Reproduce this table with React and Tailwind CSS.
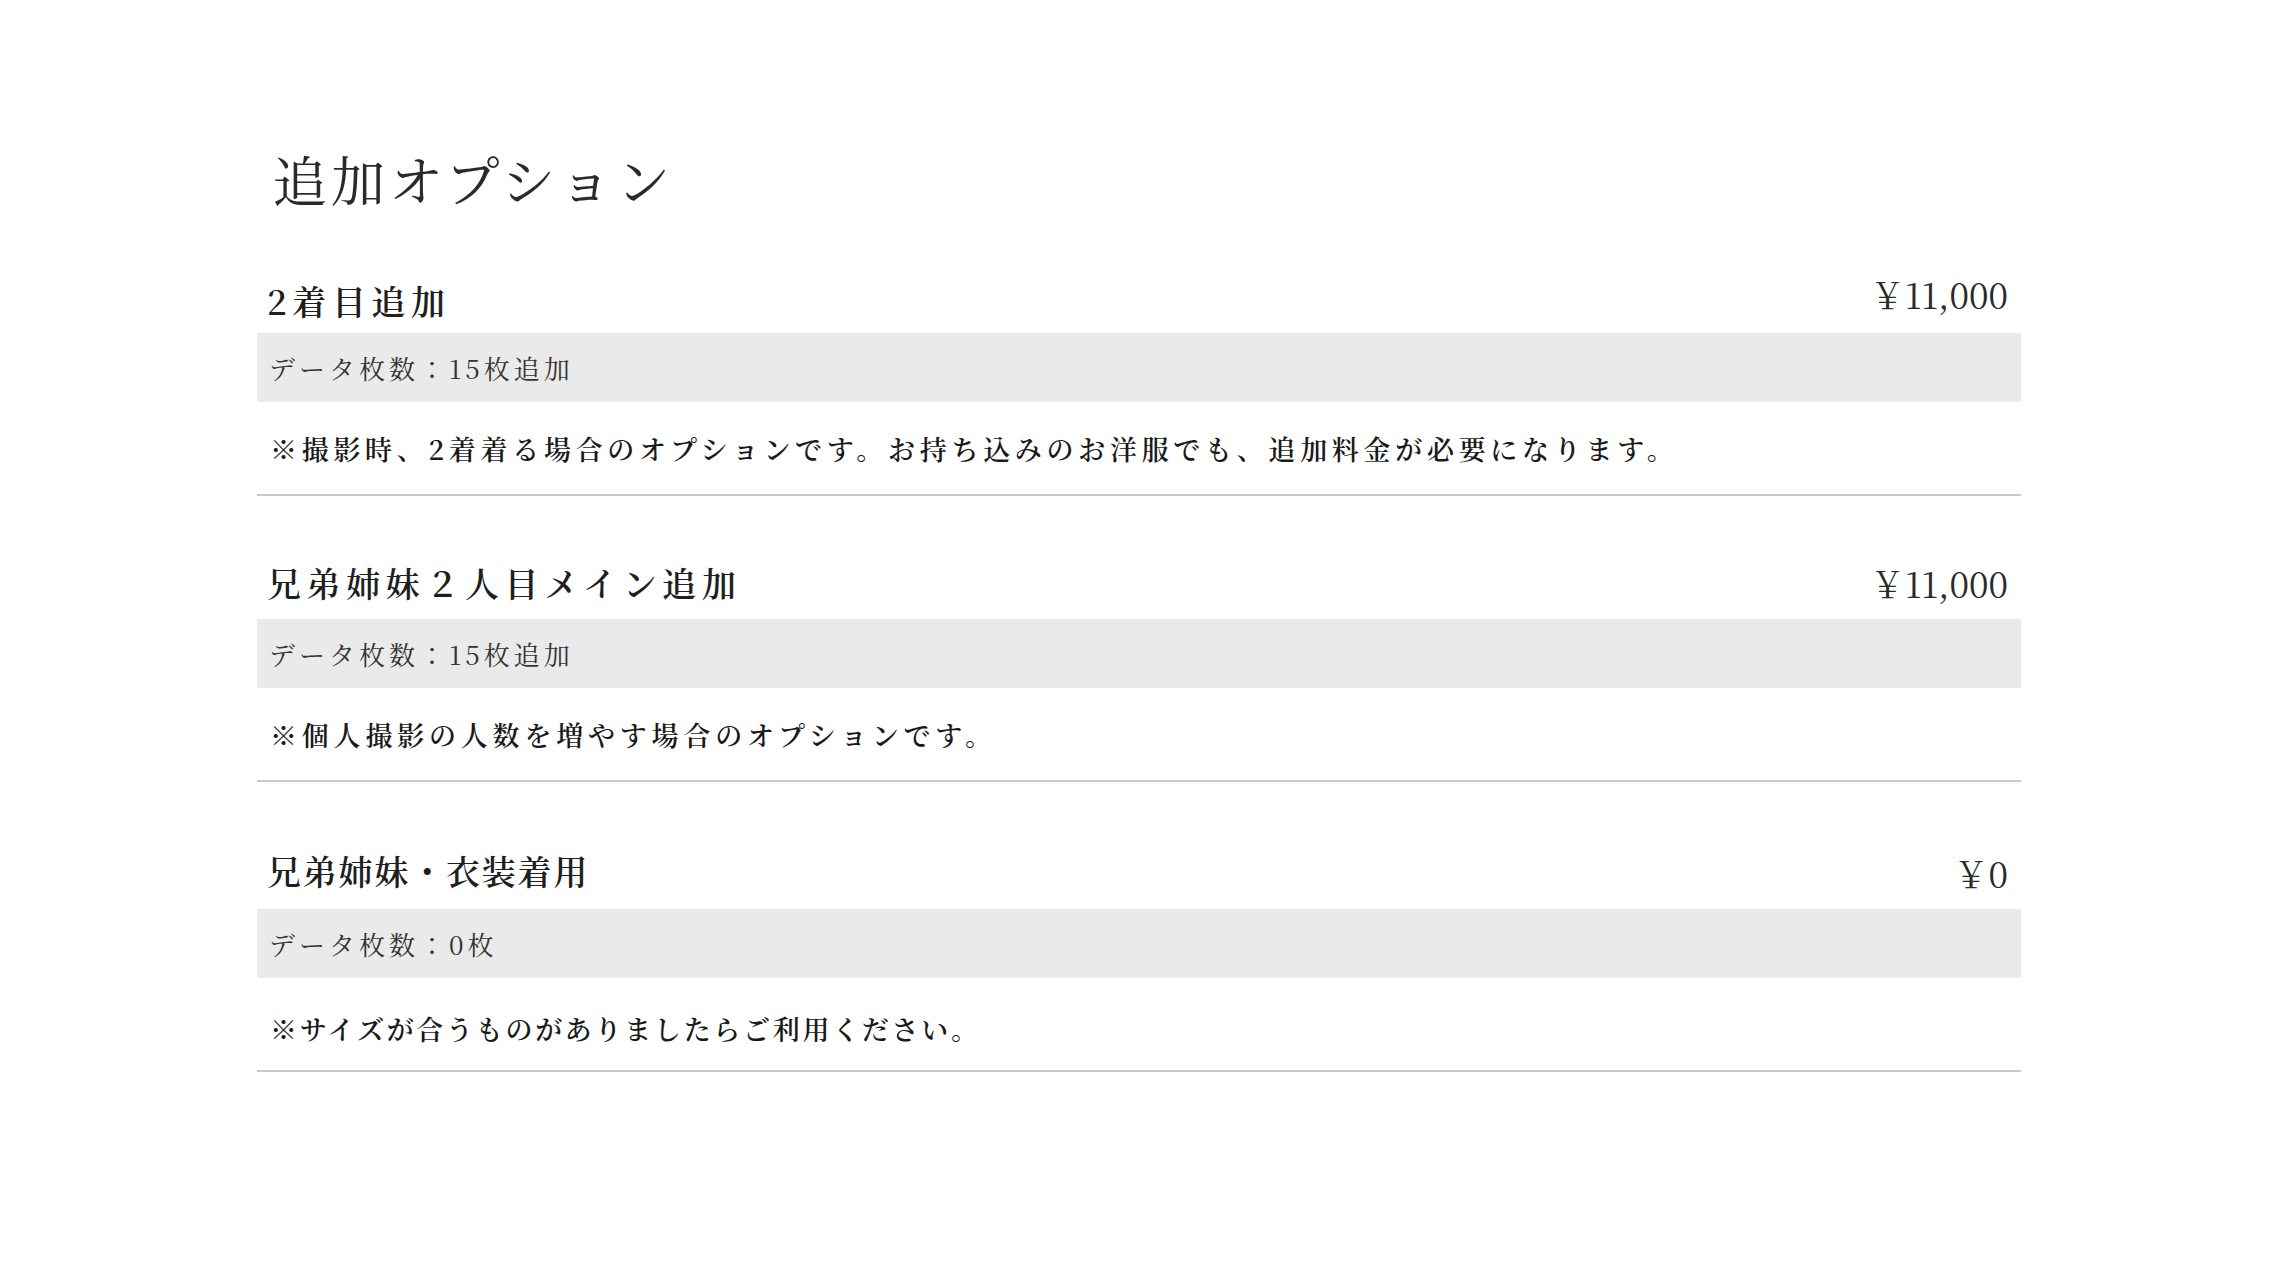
import React from "react";

const items = [
  {
    name: "2着目追加",
    nameCls: "tracking-[5.6px] pt-[8px]",
    price: "￥11,000",
    priceCls: "pb-[5px]",
    data: "データ枚数：15枚追加",
    note: "※撮影時、2着着る場合のオプションです。お持ち込みのお洋服でも、追加料金が必要になります。",
    noteCls: "tracking-[4.7px]",
    noteBox: "",
    sectionCls: "",
  },
  {
    name: "兄弟姉妹２人目メイン追加",
    nameCls: "tracking-[5.6px]",
    price: "￥11,000",
    priceCls: "",
    data: "データ枚数：15枚追加",
    note: "※個人撮影の人数を増やす場合のオプションです。",
    noteCls: "tracking-[4.8px]",
    noteBox: "",
    sectionCls: "pt-[51px]",
  },
  {
    name: "兄弟姉妹・衣装着用",
    nameCls: "tracking-[1.8px] pb-[4px]",
    price: "￥0",
    priceCls: "",
    data: "データ枚数：0枚",
    note: "※サイズが合うものがありましたらご利用ください。",
    noteCls: "tracking-[2.7px]",
    noteBox: "pt-[8px]",
    sectionCls: "pt-[55px]",
  },
];

export default function App() {
  return (
    <div
      className="min-h-[1281px] w-full bg-white text-[#222]"
      style={{ fontFamily: '"Noto Serif CJK JP", "Liberation Serif", "Noto Sans CJK JP", serif' }}
    >
      <div className="mx-auto w-[1764px] pt-[152px]">
        <h1 className="pl-[16px] text-[54px] leading-none font-normal tracking-[4px] text-[#2a2a2a]">
          追加オプション
        </h1>
        <div className="mt-[55px] flex flex-col">
          {items.map((it, i) => (
            <section key={i} className={`border-b-2 border-[#c9c9c9] ${it.sectionCls}`}>
              <div className="flex h-[72px] items-center justify-between pl-[10px] pr-[13px]">
                <h2 className={`text-[34px] leading-none font-semibold text-[#1f1f1f] ${it.nameCls}`}>
                  {it.name}
                </h2>
                <span className={`text-[35px] leading-none font-normal text-[#2a2a2a] ${it.priceCls}`}>
                  {it.price}
                </span>
              </div>
              <div className="flex h-[69px] items-center bg-[#eaeaea] px-[12px]">
                <span className="text-[26px] leading-none tracking-[4px] text-[#333]">{it.data}</span>
              </div>
              <div className={`flex h-[92px] items-center pl-[13px] ${it.noteBox}`}>
                <p className={`text-[27px] leading-none font-semibold text-[#1a1a1a] ${it.noteCls}`}>
                  {it.note}
                </p>
              </div>
            </section>
          ))}
        </div>
      </div>
    </div>
  );
}
